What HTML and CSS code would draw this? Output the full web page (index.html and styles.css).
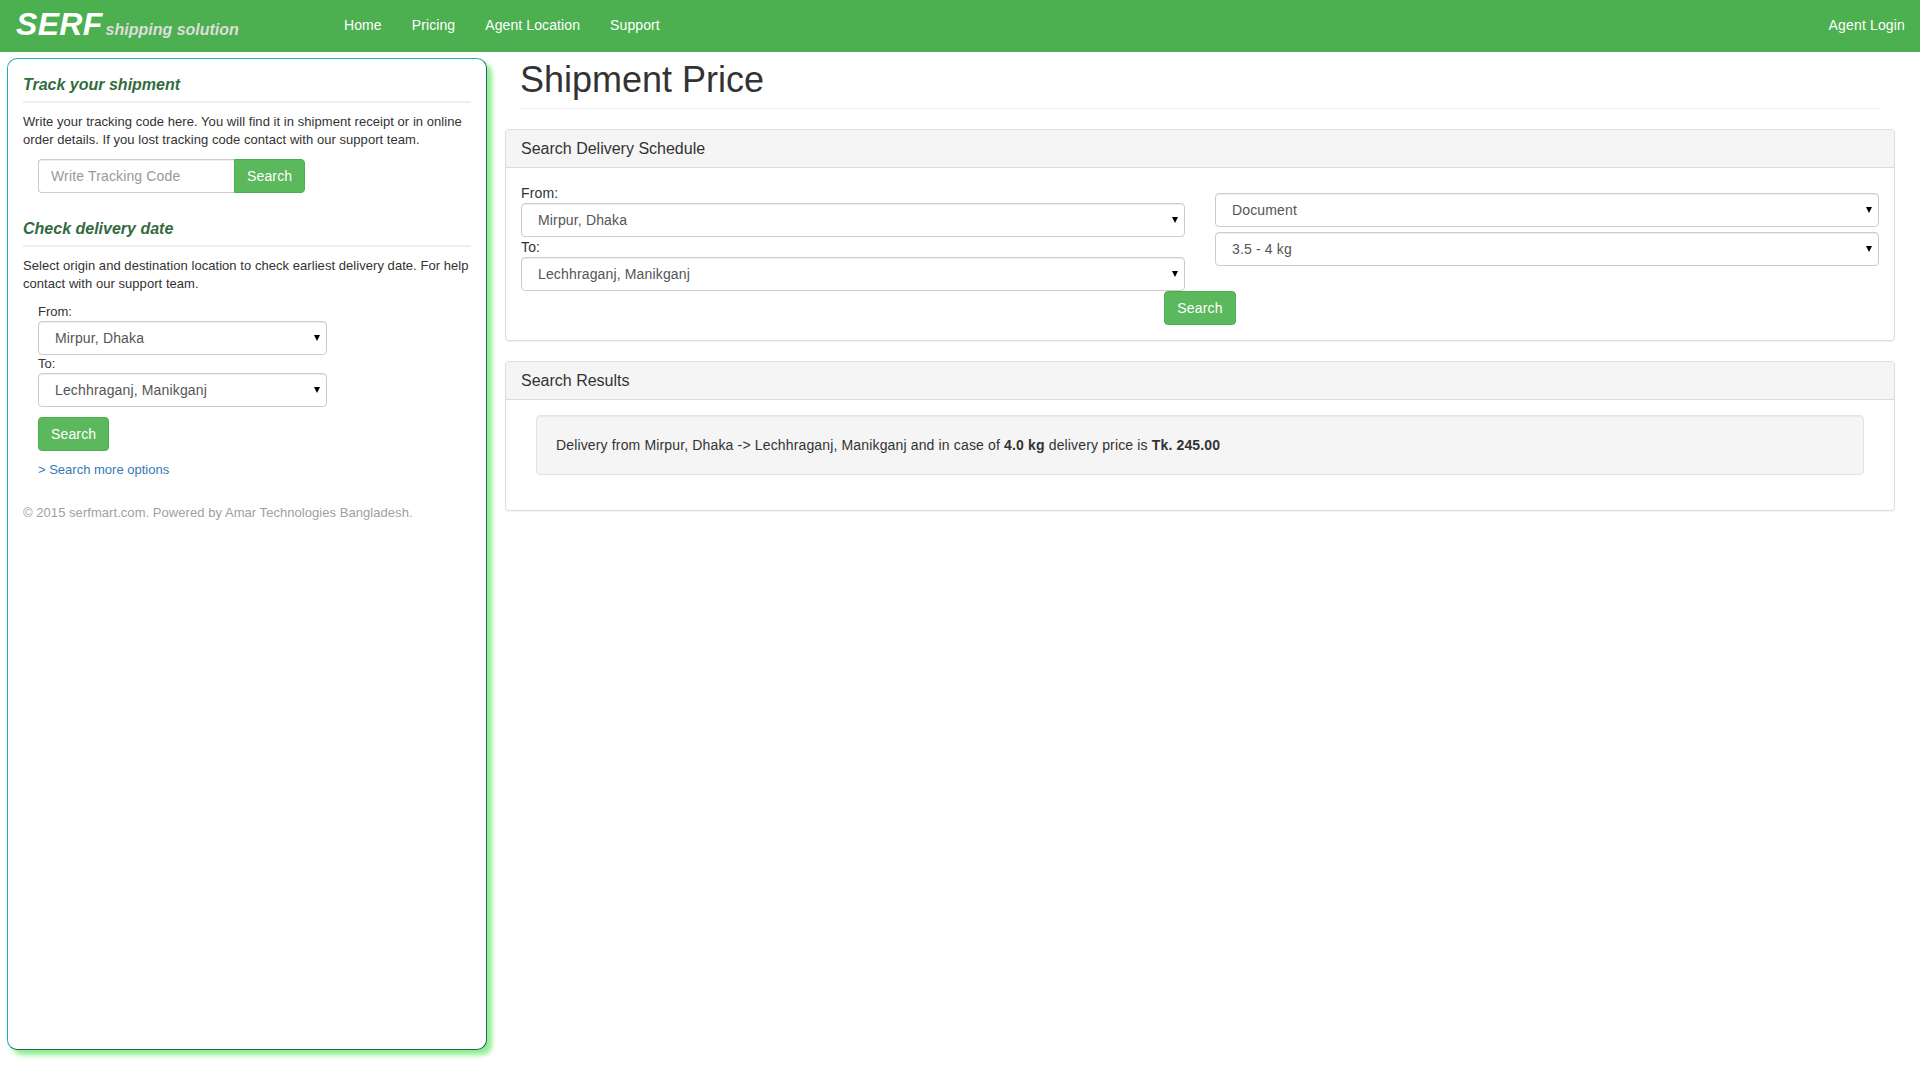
FILE: index.html
```html
<!DOCTYPE html>
<html lang="en">
<head>
<meta charset="utf-8">
<title>Shipment Price</title>
<link rel="stylesheet" href="styles.css">
</head>
<body>
<nav class="navbar">
  <a class="brand" href="#"><span class="brand-name">SERF</span><span class="brand-tag">shipping solution</span></a>
  <ul class="nav-links">
    <li><a href="#">Home</a></li>
    <li><a href="#">Pricing</a></li>
    <li><a href="#">Agent Location</a></li>
    <li><a href="#">Support</a></li>
  </ul>
  <a class="nav-login" href="#">Agent Login</a>
</nav>
<div class="page">
  <aside class="sidebar">
    <h4 class="side-title">Track your shipment</h4>
    <p class="side-text">Write your tracking code here. You will find it in shipment receipt or in online order details. If you lost tracking code contact with our support team.</p>
    <div class="input-group">
      <input class="tracking-input" type="text" placeholder="Write Tracking Code">
      <button class="btn btn-joined" type="button">Search</button>
    </div>
    <h4 class="side-title side-title-second">Check delivery date</h4>
    <p class="side-text">Select origin and destination location to check earliest delivery date. For help contact with our support team.</p>
    <form class="side-form">
      <label class="side-label">From:</label>
      <div class="select-wrap"><select class="control"><option>Mirpur, Dhaka</option></select></div>
      <label class="side-label">To:</label>
      <div class="select-wrap"><select class="control"><option>Lechhraganj, Manikganj</option></select></div>
      <button class="btn side-btn" type="button">Search</button>
      <a class="more-link" href="#">&gt; Search more options</a>
    </form>
    <p class="copyright">© 2015 serfmart.com. Powered by Amar Technologies Bangladesh.</p>
  </aside>
  <main class="content">
    <div class="page-header"><h1>Shipment Price</h1></div>
    <section class="panel">
      <div class="panel-heading">Search Delivery Schedule</div>
      <div class="panel-body">
        <div class="form-grid">
          <div>
            <label class="main-label">From:</label>
            <div class="select-wrap"><select class="control"><option>Mirpur, Dhaka</option></select></div>
            <label class="main-label">To:</label>
            <div class="select-wrap"><select class="control"><option>Lechhraganj, Manikganj</option></select></div>
          </div>
          <div class="form-right">
            <div class="select-wrap"><select class="control"><option>Document</option></select></div>
            <div class="select-wrap"><select class="control"><option>3.5 - 4 kg</option></select></div>
          </div>
        </div>
        <div class="form-action"><button class="btn" type="button">Search</button></div>
      </div>
    </section>
    <section class="panel">
      <div class="panel-heading">Search Results</div>
      <div class="panel-body">
        <div class="well">Delivery from Mirpur, Dhaka -&gt; Lechhraganj, Manikganj and in case of <b>4.0 kg</b> delivery price is <b>Tk. 245.00</b></div>
      </div>
    </section>
  </main>
</div>
</body>
</html>
```

FILE: styles.css
```css
* { box-sizing: border-box; }

html, body { margin: 0; padding: 0; }

body {
  min-height: 100vh;
  font-family: "Liberation Sans", Arial, sans-serif;
  font-size: 14px;
  line-height: 20px;
  letter-spacing: .15px;
  color: #333;
  background: #fff;
}

a { text-decoration: none; }

.navbar {
  display: flex;
  height: 52px;
  background: #4caf50;
  color: #fff;
}

.brand {
  display: flex;
  align-items: baseline;
  width: 329px;
  padding: 3px 0 0 16px;
  color: #fff;
  font-weight: bold;
  font-style: italic;
  letter-spacing: 0;
}

.brand-name { font-size: 32px; line-height: 42px; letter-spacing: .3px; }

.brand-tag { margin-left: 3px; font-size: 16px; color: #ddd; }

.nav-links {
  display: flex;
  margin: 0;
  padding: 0;
  list-style: none;
  letter-spacing: .1px;
}

.nav-links a,
.nav-login {
  display: block;
  padding: 15px;
  color: #fff;
}

.nav-login { margin-left: auto; }

.page { display: flex; align-items: flex-start; padding-bottom: 20px; }

.sidebar {
  flex: none;
  width: 480px;
  height: 992px;
  margin: 6px 0 0 7px;
  padding: 0 15px;
  background: #fff;
  border: 1px solid #20b2aa;
  border-right-color: #1a6b5a;
  border-bottom-color: #1a6b5a;
  border-radius: 10px;
  box-shadow: 5px 5px 5px #90ee90;
}

.side-title {
  margin: 17px 0 0;
  padding-bottom: 7px;
  border-bottom: 2px solid #eee;
  color: #336b3f;
  font-size: 16px;
  line-height: 18px;
  font-style: italic;
  font-weight: bold;
  letter-spacing: 0;
}

.side-title-second { margin-top: 27px; }

.side-text {
  margin: 10px 0 0;
  font-size: 13px;
  line-height: 18px;
  letter-spacing: .05px;
}

.input-group {
  display: flex;
  margin: 10px 0 0 15px;
}

.tracking-input {
  flex: none;
  width: 196px;
  height: 34px;
  padding: 6px 12px;
  border: 1px solid #ccc;
  border-right: 0;
  border-radius: 4px 0 0 4px;
  color: #555;
  font: 14px "Liberation Sans", Arial, sans-serif;
  letter-spacing: .15px;
  box-shadow: inset 0 1px 1px rgba(0, 0, 0, .075);
}

.tracking-input::placeholder { color: #999; opacity: 1; }

.btn {
  height: 34px;
  padding: 6px 12px;
  background: #5cb85c;
  border: 1px solid #4cae4c;
  border-radius: 4px;
  color: #fff;
  font: 14px/20px "Liberation Sans", Arial, sans-serif;
  letter-spacing: .15px;
}

.btn-joined { border-radius: 0 4px 4px 0; }

.side-form { margin: 10px 0 0 15px; width: 289px; }

.side-label {
  display: block;
  font-size: 13px;
  line-height: 18px;
  letter-spacing: 0;
}

.main-label { display: block; }

.select-wrap { position: relative; }

.select-wrap::after {
  content: "";
  position: absolute;
  top: 14px;
  right: 7px;
  border-style: solid;
  border-width: 6px 3px 0;
  border-color: #000 transparent transparent;
  pointer-events: none;
}

.control {
  display: block;
  width: 100%;
  height: 34px;
  padding: 6px 24px 6px 16px;
  background: #fff;
  border: 1px solid #ccc;
  border-radius: 4px;
  color: #555;
  font: 14px "Liberation Sans", Arial, sans-serif;
  letter-spacing: .15px;
  appearance: none;
  -webkit-appearance: none;
  box-shadow: inset 0 1px 1px rgba(0, 0, 0, .075);
}

.side-btn { display: block; margin-top: 10px; }

.more-link {
  display: block;
  margin-top: 10px;
  color: #337ab7;
  font-size: 13px;
  line-height: 18px;
  letter-spacing: 0;
}

.copyright {
  margin: 25px 0 0;
  color: #a0a0a0;
  font-size: 13px;
  line-height: 18px;
  letter-spacing: .05px;
}

.content {
  flex: none;
  width: 1390px;
  margin-left: 18px;
}

.page-header {
  margin: 0 14px 20px 15px;
  padding: 8px 0 8px;
  border-bottom: 1px solid #eee;
}

.page-header h1 {
  margin: 0;
  color: #333;
  font-size: 36px;
  line-height: 40px;
  font-weight: 500;
  letter-spacing: 0;
}

.panel {
  margin-bottom: 20px;
  background: #fff;
  border: 1px solid #ddd;
  border-radius: 4px;
  box-shadow: 0 1px 1px rgba(0, 0, 0, .05);
}

.panel-heading {
  height: 38px;
  padding: 10px 15px;
  background: #f5f5f5;
  border-bottom: 1px solid #ddd;
  border-radius: 3px 3px 0 0;
  font-size: 16px;
  line-height: 18px;
  letter-spacing: 0;
}

.panel-body { padding: 15px; }

.form-grid {
  display: grid;
  grid-template-columns: 1fr 1fr;
  column-gap: 30px;
}

.form-right {
  display: flex;
  flex-direction: column;
  gap: 5px;
  padding-top: 10px;
}

.form-action { display: flex; justify-content: center; }

.well {
  margin: 0 15px 20px;
  padding: 19px;
  background: #f5f5f5;
  border: 1px solid #e3e3e3;
  border-radius: 4px;
  box-shadow: inset 0 1px 1px rgba(0, 0, 0, .05);
}
```
